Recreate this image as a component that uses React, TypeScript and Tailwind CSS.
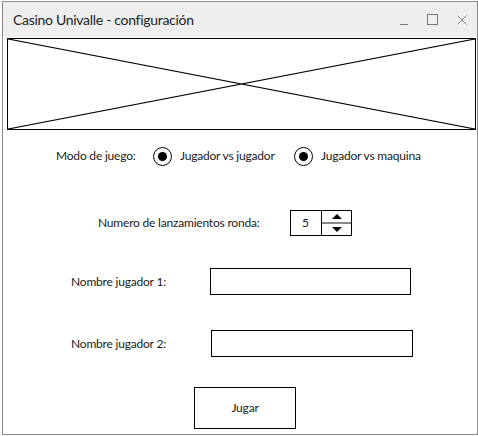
import React from "react";

const Radio = () => (
  <span className="flex h-[19px] w-[19px] items-center justify-center rounded-full border-[1.5px] border-black">
    <span className="h-[9px] w-[9px] rounded-full bg-black" />
  </span>
);

export default function App() {
  return (
    <div className="h-[436px] w-[478px] bg-white pl-[2px] pt-[1px] text-[12px] tracking-[-0.2px] text-[#1a1a1a]" style={{ fontFamily: "Lato, 'Noto Sans', sans-serif" }}>
      <div className="h-[434px] w-[476px] border border-[#8c8c8c] bg-white">
        {/* title bar */}
        <div className="flex h-[35px] items-center bg-[#eeeeee] pl-[10px]">
          <span className="text-[14px] tracking-[-0.3px] text-[#222]">Casino Univalle - configuración</span>
          <div className="ml-auto flex items-center gap-[19px] pr-[10px]">
            <span className="mt-[10px] h-px w-[8px] bg-[#777]" />
            <span className="h-[11px] w-[11px] border border-[#777]" />
            <svg width="10" height="10" viewBox="0 0 10 10">
              <path d="M0.5 0.5 L9.5 9.5 M9.5 0.5 L0.5 9.5" stroke="#888" strokeWidth="1" />
            </svg>
          </div>
        </div>

        {/* image placeholder */}
        <div className="ml-[4px] mt-px h-[92px] w-[469px] border border-black">
          <svg width="100%" height="100%" viewBox="0 0 467 90" preserveAspectRatio="none">
            <path d="M0 0 L467 90 M467 0 L0 90" stroke="black" strokeWidth="1.2" fill="none" />
          </svg>
        </div>

        {/* modo de juego */}
        <div className="mt-[16px] flex h-[20px] items-center pl-[53px]">
          <span className="w-[97px]">Modo de juego:</span>
          <Radio />
          <span className="ml-[8px] w-[114px]">Jugador vs jugador</span>
          <Radio />
          <span className="ml-[8px]">Jugador vs maquina</span>
        </div>

        {/* lanzamientos */}
        <div className="mt-[44px] flex h-[26px] items-center pl-[95px]">
          <span className="w-[192px]">Numero de lanzamientos ronda:</span>
          <div className="flex h-[26px] w-[62px] border border-black">
            <span className="flex w-[31px] items-center border-r border-black pl-[11px]">5</span>
            <div className="flex flex-1 flex-col">
              <div className="flex flex-1 items-center justify-center">
                <svg width="10" height="5" viewBox="0 0 10 5"><path d="M0 5 L5 0 L10 5 Z" fill="black" /></svg>
              </div>
              <div className="h-[2px] bg-[#888]" />
              <div className="flex flex-1 items-center justify-center">
                <svg width="10" height="5" viewBox="0 0 10 5"><path d="M0 0 L10 0 L5 5 Z" fill="black" /></svg>
              </div>
            </div>
          </div>
        </div>

        {/* nombre 1 */}
        <div className="mt-[32px] flex h-[27px] items-center pl-[68px]">
          <span className="w-[139px]">Nombre jugador 1:</span>
          <div className="h-[27px] w-[201px] border border-black" />
        </div>

        {/* nombre 2 */}
        <div className="mt-[35px] flex h-[27px] items-center pl-[68px]">
          <span className="w-[140px]">Nombre jugador 2:</span>
          <div className="h-[27px] w-[202px] border border-black" />
        </div>

        {/* jugar */}
        <div className="mt-[30px] pl-[191px]">
          <button className="h-[42px] w-[102px] border border-black bg-white">Jugar</button>
        </div>
      </div>
    </div>
  );
}
